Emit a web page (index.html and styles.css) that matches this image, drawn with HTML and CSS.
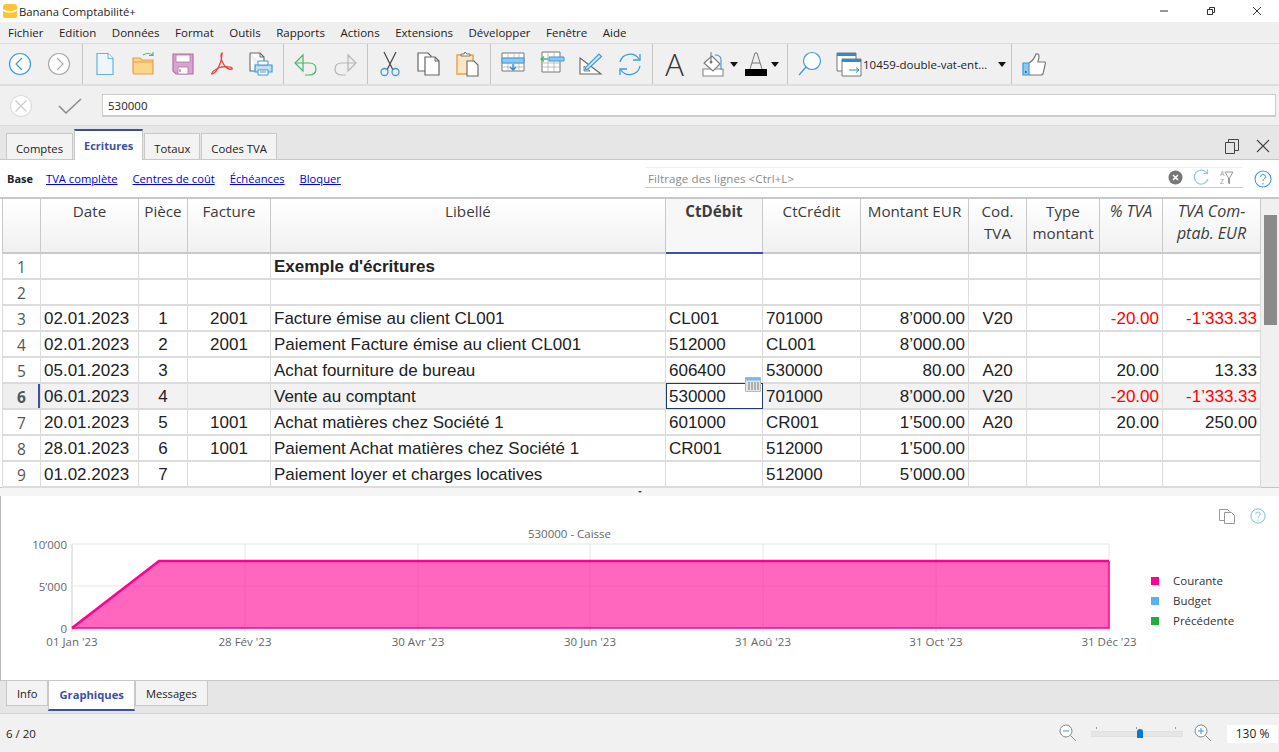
FILE: index.html
```html
<!DOCTYPE html>
<html lang="fr">
<head>
<meta charset="UTF-8" />
<title>Banana Comptabilité+</title>
<link rel="stylesheet" href="styles.css">
</head>
<body>
  <div class="titlebar">
    <svg class="app-logo" width="16" height="16" viewBox="0 0 16 16"><path d="M1 4q0-3 3-3h8q3 0 3 3v9q0 2-2 2H3q-2 0-2-2z" fill="#fcc534"/><path d="M1 7q7 4 14 0" fill="none" stroke="#fff" stroke-width="1.6"/></svg>
    <span class="app-name">Banana Comptabilité+</span>
    <div class="win-btns">
      <svg width="12" height="12" viewBox="0 0 12 12"><path d="M1 6h8" stroke="#333" fill="none"/></svg>
      <svg width="12" height="12" viewBox="0 0 12 12"><path d="M2.500 4.500h5v5h-5zM4.500 4.500v-2h5v5h-2" stroke="#333" fill="none"/></svg>
      <svg width="12" height="12" viewBox="0 0 12 12"><path d="M2 2l8 8M10 2l-8 8" stroke="#333" fill="none"/></svg>
    </div>
  </div>

  <nav class="menubar">
    <span>Fichier</span><span>Edition</span><span>Données</span><span>Format</span><span>Outils</span><span>Rapports</span><span>Actions</span><span>Extensions</span><span>Développer</span><span>Fenêtre</span><span>Aide</span>
  </nav>

  <div class="toolbar">
    <div class="tb-group first">
      <div class="tb-btn"><svg width="26" height="26" viewBox="0 0 26 26"><circle cx="13" cy="13" r="10.500" fill="#fff" stroke="#3a9ad9" stroke-width="1.200"/><path d="M15 7l-6 6 6 6" fill="none" stroke="#3a9ad9" stroke-width="1.200"/></svg></div>
      <div class="tb-btn"><svg width="26" height="26" viewBox="0 0 26 26"><circle cx="13" cy="13" r="10.500" fill="#fff" stroke="#aaa" stroke-width="1.200"/><path d="M11 7l6 6-6 6" fill="none" stroke="#aaa" stroke-width="1.200"/></svg></div>
    </div>
    <div class="tb-group">
      <div class="tb-btn"><svg width="26" height="26" viewBox="0 0 26 26"><path d="M5 2.500h11l5 5v16H5z" fill="#edf6fc" stroke="#6ab0de" stroke-width="1.200"/><path d="M16 2.500v5h5" fill="#fff" stroke="#6ab0de"/></svg></div>
      <div class="tb-btn"><svg width="26" height="26" viewBox="0 0 26 26"><path d="M2 7h7l2 2h11v14H4q-2 0-2-2z" fill="#f9d68a" stroke="#e79c4a" stroke-width="1.200"/><path d="M2 11h20" stroke="#e79c4a" fill="none"/><path d="M12 4q5-3 10 0M22 1v3.500h-4" fill="none" stroke="#4bb56f" stroke-width="1.100"/></svg></div>
      <div class="tb-btn"><svg width="26" height="26" viewBox="0 0 26 26"><path d="M3 3h20v20H6l-3-3z" fill="#d9a5cf" stroke="#b56fa8" stroke-width="1.200"/><path d="M6 4h14v7H6zM8 16h10v7H8z" fill="#fff" stroke="#b56fa8" stroke-width=".8"/><path d="M10 18v3" stroke="#666"/></svg></div>
      <div class="tb-btn"><svg width="26" height="26" viewBox="0 0 26 26"><path d="M13 2q-2 1 0 8 3 7 7 8 4 1 3-1-2-2-11-1-8 3-9 6-1 2 2 0 4-3 7-12 1-6 1-8z" fill="none" stroke="#e8433e" stroke-width="1.300"/></svg></div>
      <div class="tb-btn"><svg width="26" height="26" viewBox="0 0 26 26"><path d="M2 2h10l4 4v8M2 2v18h6" fill="#fff" stroke="#666" stroke-width="1.100"/><path d="M12 2v4h4" fill="none" stroke="#666"/><path d="M7 14h17v7H7z" fill="#bfe0f5" stroke="#3a9ad9" stroke-width="1.200"/><path d="M10 10h10v4H10zM10 19h10v5H10z" fill="#fff" stroke="#3a9ad9"/><path d="M12 21h6" stroke="#888"/></svg></div>
    </div>
    <div class="tb-group">
      <div class="tb-btn"><svg width="26" height="26" viewBox="0 0 26 26"><path d="M10 4l-8 8 8 8z" fill="none" stroke="#4bb56f" stroke-width="1.200"/><path d="M2 12h14q7 0 7 6t-7 6h-4" fill="none" stroke="#4bb56f" stroke-width="1.200"/></svg></div>
      <div class="tb-btn"><svg width="26" height="26" viewBox="0 0 26 26"><path d="M16 4l8 8-8 8z" fill="none" stroke="#b5b5b5" stroke-width="1.200"/><path d="M24 12H10q-7 0-7 6t7 6h4" fill="none" stroke="#b5b5b5" stroke-width="1.200"/></svg></div>
    </div>
    <div class="tb-group">
      <div class="tb-btn"><svg width="26" height="26" viewBox="0 0 26 26"><path d="M7 1l9 18M19 1l-9 18" fill="none" stroke="#444" stroke-width="1.200"/><circle cx="7.500" cy="21" r="3.500" fill="none" stroke="#3a9ad9" stroke-width="1.300"/><circle cx="18.500" cy="21" r="3.500" fill="none" stroke="#3a9ad9" stroke-width="1.300"/></svg></div>
      <div class="tb-btn"><svg width="26" height="26" viewBox="0 0 26 26"><path d="M2 2h10l3 3v15H2z" fill="#fff" stroke="#666" stroke-width="1.200"/><path d="M9 6h10l4 4v14H9z" fill="#fff" stroke="#666" stroke-width="1.200"/><path d="M19 6v4h4" fill="none" stroke="#666"/></svg></div>
      <div class="tb-btn"><svg width="26" height="26" viewBox="0 0 26 26"><path d="M2 4h16v19H2z" fill="#fbe6c4" stroke="#eda24e" stroke-width="1.500"/><path d="M6 5V3h3l1-2 2 2h3v2z" fill="#fff" stroke="#777"/><path d="M12 10h7l4 4v11H12z" fill="#fff" stroke="#666" stroke-width="1.100"/></svg></div>
    </div>
    <div class="tb-group">
      <div class="tb-btn"><svg width="26" height="26" viewBox="0 0 26 26"><path d="M2 2h22v18H2z" fill="#fff" stroke="#777"/><path d="M2 7h22M2 12h22M2 16h22M8 2v18M14 2v18M19 2v18" stroke="#aaa" stroke-width=".7" fill="none"/><path d="M2 7h22v5H2z" fill="#8ec8ee" stroke="#3a9ad9"/><path d="M13 13v6M10 16l3 3 3-3" fill="none" stroke="#2a8bd0" stroke-width="1.300"/></svg></div>
      <div class="tb-btn"><svg width="26" height="26" viewBox="0 0 26 26"><path d="M3 1h18v20H3z" fill="#fff" stroke="#777"/><path d="M3 12h18M3 16h18M9 1v20M15 1v20" stroke="#aaa" stroke-width=".7" fill="none"/><path d="M10 6h15v4H10z" fill="#8ec8ee" stroke="#3a9ad9"/><path d="M9 8H2M5 5.500L2 8l3 2.500" fill="none" stroke="#4bb56f" stroke-width="1.300"/></svg></div>
      <div class="tb-btn"><svg width="26" height="26" viewBox="0 0 26 26"><path d="M2 7l21 16H2z" fill="#fff" stroke="#666" stroke-width="1.100"/><path d="M6 15l6 5H6z" fill="#eee" stroke="#666" stroke-width=".8"/><path d="M8 16L21 3l2.500 2.500L10 18l-3 1z" fill="#cfe8f8" stroke="#3a9ad9" stroke-width="1.100"/></svg></div>
      <div class="tb-btn"><svg width="26" height="26" viewBox="0 0 26 26"><path d="M3 11A10.500 10.500 0 0 1 22 8M23 15A10.500 10.500 0 0 1 4 19" fill="none" stroke="#3a9ad9" stroke-width="1.300"/><path d="M23 3v6h-7M3 24v-6h7" fill="none" stroke="#3a9ad9" stroke-width="1.300"/></svg></div>
    </div>
    <div class="tb-group">
      <div class="tb-btn"><span class="big-a">A</span></div>
      <div class="tb-btn tb-fill">
        <svg width="26" height="26" viewBox="0 0 26 26"><path d="M3 18h20v7H3z" fill="#fff" stroke="#888" stroke-width="1.100"/><path d="M4 12l8-7 8 8-7 7z" fill="#fff" stroke="#777" stroke-width="1.100"/><path d="M11 1v10" stroke="#777"/><circle cx="11" cy="11" r="1.500" fill="#777"/><path d="M15 4q6 0 6 5v10" fill="none" stroke="#3a9ad9" stroke-width="1.100"/></svg>
        <i class="caret"></i>
      </div>
      <div class="tb-btn tb-color">
        <svg width="22" height="26" viewBox="0 0 22 26"><path d="M5 18L10 2h2l5 16M7 12h8" fill="none" stroke="#777"/><path d="M0 18h22v7H0z" fill="#000"/></svg>
        <i class="caret"></i>
      </div>
    </div>
    <div class="tb-group">
      <div class="tb-btn"><svg width="26" height="26" viewBox="0 0 26 26"><circle cx="15" cy="10" r="8.500" fill="#fff" stroke="#3a9ad9" stroke-width="1.200"/><path d="M9 16l-7 8" fill="none" stroke="#3a9ad9" stroke-width="1.200"/></svg></div>
      <div class="tb-doc">
        <svg width="26" height="26" viewBox="0 0 26 26"><path d="M1 2h19v18H1z" fill="#fff" stroke="#777"/><path d="M1 2h19v3H1z" fill="#2a8bd0"/><path d="M6 8h19v17H6z" fill="#fff" stroke="#777"/><path d="M6 8h19v3H6z" fill="#2a8bd0"/><path d="M13 19h10M20 16.500l3 2.500-3 2.500" fill="none" stroke="#2a8bd0"/></svg>
        <span class="doc-name">10459-double-vat-ent...</span>
        <i class="caret"></i>
      </div>
    </div>
    <div class="tb-group last">
      <div class="tb-btn"><svg width="26" height="26" viewBox="0 0 26 26"><path d="M8 12q5-3 7-9 3-1 3 3l-1 5h7q1 1 0 3l-2 9q-1 1-2 1H8" fill="#fff" stroke="#777" stroke-width="1.200"/><path d="M2 12h6v12H2z" fill="#8ec8ee" stroke="#3a9ad9" stroke-width="1.200"/><path d="M4 21h1.500" stroke="#333" stroke-width="1.500"/></svg></div>
    </div>
  </div>

  <div class="formulabar">
    <svg class="fb-cancel" width="24" height="24" viewBox="0 0 24 24"><circle cx="12" cy="12" r="10.500" fill="#fff" stroke="#ddd" stroke-width="1.200"/><path d="M6.500 6.500l11 11M17.500 6.500l-11 11" stroke="#ccc" stroke-width="1.200" fill="none"/></svg>
    <svg class="fb-ok" width="24" height="24" viewBox="0 0 24 24"><path d="M1 12l7 7L23 5" stroke="#8a8a8a" stroke-width="1.500" fill="none"/></svg>
    <div class="fb-input">530000</div>
  </div>

  <div class="tabbar">
    <div class="tab">Comptes</div>
    <div class="tab active">Ecritures</div>
    <div class="tab">Totaux</div>
    <div class="tab">Codes TVA</div>
    <div class="tab-tools">
      <svg width="16" height="16" viewBox="0 0 16 16"><path d="M1.500 4.500h9v11h-9zM4.500 4.500v-3h10v11h-4" fill="none" stroke="#444"/></svg>
      <svg width="16" height="16" viewBox="0 0 16 16"><path d="M2 2l12 12M14 2L2 14" fill="none" stroke="#444" stroke-width="1.100"/></svg>
    </div>
  </div>

  <div class="linkbar">
    <b>Base</b>
    <a href="#">TVA complète</a>
    <a href="#">Centres de coût</a>
    <a href="#">Échéances</a>
    <a href="#">Bloquer</a>
    <div class="filter">
      <span class="filter-hint">Filtrage des lignes &lt;Ctrl+L&gt;</span>
      <svg class="f-clear" width="15" height="15" viewBox="0 0 15 15"><circle cx="7.500" cy="7.500" r="7" fill="#777"/><path d="M5 5l5 5M10 5l-5 5" stroke="#fff" stroke-width="1.600"/></svg>
      <svg class="f-refresh" width="17" height="17" viewBox="0 0 17 17"><path d="M14 4A7 7 0 1 0 15 10" fill="none" stroke="#8ec8ee" stroke-width="1.200"/><path d="M14.500 0.500v4h-4" fill="none" stroke="#8ec8ee" stroke-width="1.200"/></svg>
      <span class="f-az">A<br>Z</span>
      <svg class="f-funnel" width="10" height="16" viewBox="0 0 10 16"><path d="M1 2h8L5.500 8v6L4.500 13V8z" fill="none" stroke="#999"/></svg>
    </div>
    <svg class="help" width="18" height="18" viewBox="0 0 18 18"><circle cx="9" cy="9" r="8" fill="none" stroke="#3a9ad9" stroke-width="1.100"/><path d="M6.500 7q0-2.500 2.500-2.500t2.500 2.300q0 1.300-1.500 2.200-1 .6-1 2" fill="none" stroke="#3a9ad9"/><path d="M9 13v1.500" stroke="#3a9ad9"/></svg>
  </div>

  <div class="grid-wrap">
    <table class="grid">
      <colgroup>
        <col class="c-num"><col class="c-date"><col class="c-piece"><col class="c-fact"><col class="c-lib"><col class="c-deb"><col class="c-cre"><col class="c-mont"><col class="c-cod"><col class="c-type"><col class="c-pct"><col class="c-tva">
      </colgroup>
      <thead>
        <tr>
          <th></th><th>Date</th><th>Pièce</th><th>Facture</th><th>Libellé</th><th class="sel">CtDébit</th><th>CtCrédit</th><th>Montant EUR</th><th>Cod. TVA</th><th>Type montant</th><th class="it">% TVA</th><th class="it">TVA Com-<br>ptab. EUR</th>
        </tr>
      </thead>
      <tbody>
        <tr><td class="n">1</td><td></td><td></td><td></td><td class="title">Exemple d'écritures</td><td></td><td></td><td></td><td></td><td></td><td></td><td></td></tr>
        <tr><td class="n">2</td><td></td><td></td><td></td><td></td><td></td><td></td><td></td><td></td><td></td><td></td><td></td></tr>
        <tr><td class="n">3</td><td>02.01.2023</td><td class="c">1</td><td class="c">2001</td><td>Facture émise au client CL001</td><td>CL001</td><td>701000</td><td class="r">8’000.00</td><td class="c">V20</td><td></td><td class="r neg">-20.00</td><td class="r neg">-1’333.33</td></tr>
        <tr><td class="n">4</td><td>02.01.2023</td><td class="c">2</td><td class="c">2001</td><td>Paiement Facture émise au client CL001</td><td>512000</td><td>CL001</td><td class="r">8’000.00</td><td></td><td></td><td></td><td></td></tr>
        <tr><td class="n">5</td><td>05.01.2023</td><td class="c">3</td><td></td><td>Achat fourniture de bureau</td><td>606400</td><td>530000</td><td class="r">80.00</td><td class="c">A20</td><td></td><td class="r">20.00</td><td class="r">13.33</td></tr>
        <tr class="cur"><td class="n">6</td><td>06.01.2023</td><td class="c">4</td><td></td><td>Vente au comptant</td><td class="active-cell">530000<svg class="cal" width="16" height="15" viewBox="0 0 16 15"><path d="M.5.500h15v14H.500z" fill="#e4e4e4" stroke="#bbb"/><path d="M.500.500h15v3H.500z" fill="#7ab8e6"/><path d="M4 5v8M7 5v8M10 5v8M13 5v8" stroke="#999" stroke-width="1.400"/></svg></td><td>701000</td><td class="r">8’000.00</td><td class="c">V20</td><td></td><td class="r neg">-20.00</td><td class="r neg">-1’333.33</td></tr>
        <tr><td class="n">7</td><td>20.01.2023</td><td class="c">5</td><td class="c">1001</td><td>Achat matières chez Société 1</td><td>601000</td><td>CR001</td><td class="r">1’500.00</td><td class="c">A20</td><td></td><td class="r">20.00</td><td class="r">250.00</td></tr>
        <tr><td class="n">8</td><td>28.01.2023</td><td class="c">6</td><td class="c">1001</td><td>Paiement Achat matières chez Société 1</td><td>CR001</td><td>512000</td><td class="r">1’500.00</td><td></td><td></td><td></td><td></td></tr>
        <tr><td class="n">9</td><td>01.02.2023</td><td class="c">7</td><td></td><td>Paiement loyer et charges locatives</td><td></td><td>512000</td><td class="r">5’000.00</td><td></td><td></td><td></td><td></td></tr>
      </tbody>
    </table>
    <div class="vscroll"><div class="vthumb"></div></div>
  </div>

  <div class="splitter"><i></i></div>

  <div class="chart-panel">
    <div class="chart-tools">
      <svg width="18" height="16" viewBox="0 0 18 16"><path d="M1.500 1.500h8l2 2v9h-10z" fill="#fff" stroke="#999"/><path d="M6.500 4.500h7l3 3v8h-10z" fill="#fff" stroke="#999"/></svg>
      <svg width="16" height="16" viewBox="0 0 18 18"><circle cx="9" cy="9" r="8" fill="none" stroke="#7ab8e6" stroke-width="1.100"/><path d="M6.500 7q0-2.500 2.500-2.500t2.500 2.300q0 1.300-1.500 2.200-1 .6-1 2" fill="none" stroke="#7ab8e6"/><path d="M9 13v1.500" stroke="#7ab8e6"/></svg>
    </div>
    <svg class="chart" width="1278" height="184" viewBox="1 496 1278 184">
      <g stroke="#e6e6e6" fill="none">
        <path d="M72 544h1037M72 586h1037M72 628h1037"/>
        <path d="M245 544v88M418 544v88M590 544v88M763 544v88M936 544v88M1109 544v88" />
        <path d="M72 544v88" stroke-width="2"/>
      </g>
      <path d="M72 628L159 561H1109V628z" fill="#ff0a96" fill-opacity=".62"/>
      <path d="M72 628L159 561H1109" fill="none" stroke="#ff0090" stroke-width="2.500"/>
      <path d="M1109 561V628H72" fill="none" stroke="#ff0090" stroke-width="1.500"/>
      <g class="ch-label" text-anchor="middle">
        <text x="569.500" y="538">530000 - Caisse</text>
        <text x="72" y="646">01 Jan '23</text>
        <text x="245" y="646">28 Fév '23</text>
        <text x="418" y="646">30 Avr '23</text>
        <text x="590" y="646">30 Jun '23</text>
        <text x="763" y="646">31 Aoû '23</text>
        <text x="936" y="646">31 Oct '23</text>
        <text x="1109" y="646">31 Déc '23</text>
      </g>
      <g class="ch-label" text-anchor="end">
        <text x="67" y="549">10’000</text>
        <text x="67" y="591">5’000</text>
        <text x="67" y="633">0</text>
      </g>
      <rect x="1151" y="577" width="8" height="8" fill="#ff0090"/>
      <rect x="1151" y="597" width="8" height="8" fill="#5ab0f8"/>
      <rect x="1151" y="617" width="8" height="8" fill="#22ad3c"/>
      <g class="ch-legend">
        <text x="1173" y="585">Courante</text>
        <text x="1173" y="605">Budget</text>
        <text x="1173" y="625">Précédente</text>
      </g>
    </svg>
  </div>

  <div class="bottom-tabs">
    <div class="btab">Info</div>
    <div class="btab active">Graphiques</div>
    <div class="btab">Messages</div>
  </div>

  <div class="statusbar">
    <span class="st-count">6 / 20</span>
    <svg class="st-zoomout" width="18" height="18" viewBox="0 0 18 18"><circle cx="7" cy="7" r="6" fill="#fff" stroke="#888"/><path d="M4 7h6" stroke="#3a9ad9"/><path d="M11.500 11.500l5.500 5.500" stroke="#888"/></svg>
    <div class="slider"><i class="t1"></i><i class="t2"></i><i class="t3"></i><b></b></div>
    <svg class="st-zoomin" width="18" height="18" viewBox="0 0 18 18"><circle cx="7" cy="7" r="6" fill="#fff" stroke="#888"/><path d="M4 7h6M7 4v6" stroke="#3a9ad9"/><path d="M11.500 11.500l5.500 5.500" stroke="#888"/></svg>
    <div class="st-zoom">130 %</div>
  </div>
</body>
</html>
```

FILE: styles.css
```css
html, body {
  margin: 0;
  height: 752px;
  overflow: hidden;
}
body {
  display: flex;
  flex-direction: column;
  background-color: #f0f0f0;
  color: #222;
  font-family: "Open Sans", "Noto Sans", sans-serif;
  font-size: 11.5px;
}

/* Barre de titre */
.titlebar {
  height: 22px;
  flex: none;
  display: flex;
  align-items: center;
  background-color: #fff;
  padding-left: 2px;
  font-size: 11.300px;
}
.app-name {
  margin-left: 1px;
}
.win-btns {
  margin-left: auto;
  display: flex;
  gap: 34px;
  padding-right: 16px;
  width: 104px;
  justify-content: flex-end;
}

/* Menu */
.menubar {
  height: 21px;
  flex: none;
  display: flex;
  align-items: center;
  gap: 15.500px;
  padding-left: 8px;
  background-color: #efefef;
  border-bottom: 1px solid #dcdcdc;
}

/* Barre d'outils */
.toolbar {
  height: 40px;
  flex: none;
  display: flex;
  border-bottom: 2px solid #dedede;
  background-color: #f0f0f0;
}
.tb-group {
  display: flex;
  align-items: center;
  padding: 0 3px 0 2px;
  border-right: 1px solid #c4c4c4;
}
.tb-group.first {
  padding: 0 4px 0 0;
}
.tb-group.last {
  border-right: none;
}
.tb-btn {
  width: 39px;
  height: 40px;
  display: flex;
  align-items: center;
  justify-content: center;
}
.big-a {
  font-size: 31px;
  font-weight: 300;
  line-height: 1;
  color: #333;
}
.caret {
  display: inline-block;
  width: 0;
  height: 0;
  border-left: 4.500px solid transparent;
  border-right: 4.500px solid transparent;
  border-top: 5px solid #111;
}
.tb-fill {
  width: 51px;
  justify-content: flex-start;
  padding-left: 6px;
  box-sizing: border-box;
  gap: 4px;
}
.tb-color {
  width: 39px;
  justify-content: flex-start;
  gap: 4px;
}
.tb-doc {
  display: flex;
  align-items: center;
  width: 179px;
  padding-left: 7px;
  box-sizing: border-box;
}
.doc-name {
  width: 135px;
  margin-left: 1px;
  white-space: nowrap;
}

/* Barre de saisie */
.formulabar {
  height: 39px;
  flex: none;
  display: flex;
  align-items: center;
  padding-left: 9px;
  border-bottom: 1px solid #dcdcdc;
}
.fb-ok {
  margin-left: 25px;
}
.fb-input {
  margin-left: 20px;
  width: 1174px;
  height: 23px;
  line-height: 22px;
  padding-left: 5px;
  box-sizing: border-box;
  background-color: #fff;
  border: 1px solid #ccc;
  border-bottom-width: 2px;
}

/* Onglets */
.tabbar {
  height: 34px;
  flex: none;
  display: flex;
  align-items: flex-end;
  padding-left: 6px;
  gap: 1px;
  background-color: #e6e6e6;
  border-bottom: 1px solid #c8c8c8;
  box-sizing: border-box;
}
.tab {
  height: 25px;
  line-height: 29px;
  padding: 0 9px;
  font-size: 11.300px;
  background-color: #f3f3f3;
  border: 1px solid #c8c8c8;
  border-bottom: none;
}
.tab.active {
  height: 29px;
  line-height: 30px;
  margin-bottom: -1px;
  font-size: 11px;
  background-color: #fff;
  border-top: 2px solid #3d50a3;
  font-weight: 700;
  color: #3d50a3;
}
.tab-tools {
  margin-left: auto;
  display: flex;
  gap: 15px;
  padding: 0 8px 5px 0;
}

/* Liens */
.linkbar {
  height: 37px;
  flex: none;
  display: flex;
  align-items: center;
  padding-left: 7px;
  background-color: #fff;
  position: relative;
}
.linkbar b {
  font-size: 11px;
  margin-right: 13px;
}
.linkbar a {
  color: #0000ee;
  font-size: 11.200px;
  margin-right: 15px;
}
.filter {
  position: absolute;
  left: 645px;
  top: 7px;
  width: 598px;
  height: 21px;
  border-bottom: 1px solid #ccc;
  border-top: 1px solid #f0f0f0;
  box-sizing: border-box;
  color: #8a8a8a;
  display: flex;
  align-items: center;
  padding-left: 3px;
}
.filter-hint {
  width: 520px;
  padding-top: 2px;
  letter-spacing: .1px;
}
.f-clear {
  flex: none;
}
.f-refresh {
  margin-left: 10px;
}
.f-az {
  margin-left: 10px;
  font-size: 7px;
  line-height: 8px;
  color: #999;
}
.help {
  position: absolute;
  left: 1254px;
  top: 10px;
}

/* Tableau */
.grid-wrap {
  height: 288px;
  flex: none;
  display: flex;
  padding-left: 2px;
  background-color: #fff;
  border-top: 2px solid #c8c8c8;
  border-bottom: 1px solid #c4c4c4;
}
.grid {
  width: 1258px;
  table-layout: fixed;
  border-collapse: collapse;
  font-family: "Liberation Sans", Arial, sans-serif;
  font-size: 17px;
  color: #222;
}
.c-num { width: 38px; }
.c-date { width: 98px; }
.c-piece { width: 49px; }
.c-fact { width: 83px; }
.c-lib { width: 395px; }
.c-deb { width: 97px; }
.c-cre { width: 98px; }
.c-mont { width: 108px; }
.c-cod { width: 58px; }
.c-type { width: 73px; }
.c-pct { width: 63px; }
.c-tva { width: 98px; }
.grid th {
  height: 54px;
  padding: 1px 2px 0;
  box-sizing: border-box;
  vertical-align: top;
  font-family: "Open Sans", "Noto Sans", sans-serif;
  font-size: 15.200px;
  font-weight: 400;
  line-height: 22px;
  color: #3c3c3c;
  background: linear-gradient(#fff, #f0f0f0);
  border: 1px solid #c9c9c9;
  border-top: none;
  border-bottom: 2px solid #c9c9c9;
  overflow: hidden;
}
.grid th.it {
  font-style: italic;
  font-size: 16px;
}
.grid th.sel {
  font-weight: 700;
  background: #f7f7f7;
  border-bottom: 2px solid #3d50a3;
}
.grid td {
  height: 26px;
  padding: 1px 3px 0;
  box-sizing: border-box;
  border: 1px solid #dcdcdc;
  border-bottom-width: 2px;
  white-space: nowrap;
  overflow: hidden;
}
.grid td.n {
  text-align: center;
  font-family: "Open Sans", "Noto Sans", sans-serif;
  font-size: 15.500px;
  color: #555;
}
.grid td.c {
  text-align: center;
}
.grid td.r {
  text-align: right;
}
.grid td.neg {
  color: #f00;
}
.grid td.title {
  font-weight: 700;
}
.grid tr.cur td {
  background-color: #f2f2f2;
}
.grid tr.cur td.n {
  font-weight: 700;
  background-color: #efefef;
  box-shadow: inset -2px 0 0 #3d50a3;
}
.grid tr.cur td.active-cell {
  background-color: #fff;
  outline: 1px solid #223a70;
  outline-offset: -1px;
  position: relative;
  overflow: visible;
}
.cal {
  position: absolute;
  right: 1px;
  top: -7px;
}
.vscroll {
  width: 19px;
  background-color: #f0f0f0;
  padding: 16px 2px 0 3px;
  box-sizing: border-box;
}
.vthumb {
  height: 110px;
  background-color: #8a8a8a;
}

/* Séparateur */
.splitter {
  height: 8px;
  flex: none;
  background-color: #f5f5f5;
  position: relative;
}
.splitter i {
  position: absolute;
  left: 638px;
  top: 3px;
  border-left: 2px solid transparent;
  border-right: 2px solid transparent;
  border-top: 2px solid #444;
}

/* Graphique */
.chart-panel {
  height: 184px;
  flex: none;
  background-color: #fff;
  border-left: 1px solid #bbb;
  border-bottom: 1px solid #c8c8c8;
  position: relative;
}
.chart {
  display: block;
}
.chart-tools {
  position: absolute;
  right: 13px;
  top: 12px;
  display: flex;
  gap: 14px;
}
.ch-label text {
  font-size: 11.500px;
  fill: #666;
}
.ch-legend text {
  font-size: 11.500px;
  fill: #333;
}

/* Onglets du bas */
.bottom-tabs {
  height: 32px;
  flex: none;
  display: flex;
  align-items: flex-start;
  padding-left: 6px;
  font-size: 11.200px;
  background-color: #e6e6e6;
  border-bottom: 1px solid #d2d2d2;
}
.btab {
  height: 24px;
  line-height: 26px;
  padding: 0 10px;
  background-color: #f3f3f3;
  border: 1px solid #c8c8c8;
  border-top: none;
}
.btab.active {
  height: 28px;
  background-color: #fff;
  font-weight: 700;
  color: #3d50a3;
  border-bottom: 2px solid #3d50a3;
  line-height: 28px;
}

/* Barre d'état */
.statusbar {
  flex: 1;
  display: flex;
  align-items: center;
  padding-left: 6px;
  background-color: #f1f1f1;
  position: relative;
}
.st-zoomout {
  position: absolute;
  left: 1059px;
  top: 10px;
}
.st-zoomin {
  position: absolute;
  left: 1194px;
  top: 10px;
}
.slider {
  position: absolute;
  left: 1091px;
  top: 17px;
  width: 90px;
  height: 4px;
  background-color: #e6e6e6;
  border: 1px solid #e0e0e0;
}
.slider i {
  position: absolute;
  top: -5px;
  width: 1px;
  height: 2px;
  background-color: #999;
}
.slider .t1 { left: 4px; }
.slider .t2 { left: 44px; }
.slider .t3 { left: 83px; }
.slider b {
  position: absolute;
  left: 45px;
  top: -3px;
  width: 6px;
  height: 9px;
  background-color: #0a78d0;
  border-radius: 3px 3px 0 0;
}
.st-zoom {
  position: absolute;
  left: 1227px;
  top: 11px;
  width: 51px;
  height: 18px;
  line-height: 18px;
  text-align: center;
  background-color: #fff;
  font-size: 12px;
}
```
